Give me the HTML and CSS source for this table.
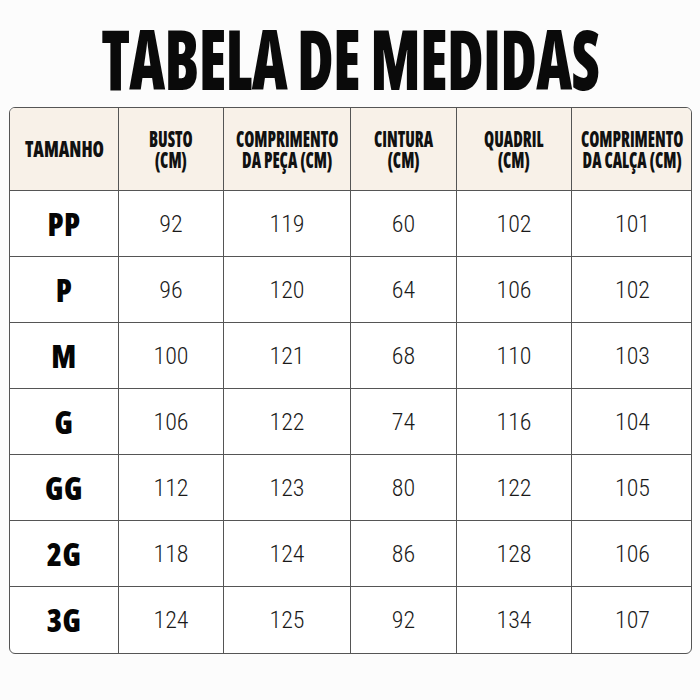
FILE: index.html
```html
<!DOCTYPE html>
<html lang="pt-BR">
<head>
<meta charset="utf-8">
<title>Tabela de Medidas</title>
<link rel="stylesheet" href="styles.css">
</head>
<body>
<main class="page">
  <h1 class="title"><span class="title-text">TABELA DE MEDIDAS</span></h1>
  <div class="table">
    <div class="cell head"><span class="head-text wide">TAMANHO</span></div>
    <div class="cell head"><span class="head-text">BUSTO
(CM)</span></div>
    <div class="cell head"><span class="head-text">COMPRIMENTO
DA PEÇA (CM)</span></div>
    <div class="cell head"><span class="head-text">CINTURA
(CM)</span></div>
    <div class="cell head"><span class="head-text">QUADRIL
(CM)</span></div>
    <div class="cell head last"><span class="head-text">COMPRIMENTO
DA CALÇA (CM)</span></div>

    <div class="cell size">PP</div><div class="cell num">92</div><div class="cell num">119</div><div class="cell num">60</div><div class="cell num">102</div><div class="cell num last">101</div>
    <div class="cell size">P</div><div class="cell num">96</div><div class="cell num">120</div><div class="cell num">64</div><div class="cell num">106</div><div class="cell num last">102</div>
    <div class="cell size">M</div><div class="cell num">100</div><div class="cell num">121</div><div class="cell num">68</div><div class="cell num">110</div><div class="cell num last">103</div>
    <div class="cell size">G</div><div class="cell num">106</div><div class="cell num">122</div><div class="cell num">74</div><div class="cell num">116</div><div class="cell num last">104</div>
    <div class="cell size">GG</div><div class="cell num">112</div><div class="cell num">123</div><div class="cell num">80</div><div class="cell num">122</div><div class="cell num last">105</div>
    <div class="cell size">2G</div><div class="cell num">118</div><div class="cell num">124</div><div class="cell num">86</div><div class="cell num">128</div><div class="cell num last">106</div>
    <div class="cell size bottom">3G</div><div class="cell num bottom">124</div><div class="cell num bottom">125</div><div class="cell num bottom">92</div><div class="cell num bottom">134</div><div class="cell num last bottom">107</div>
  </div>
</main>
</body>
</html>
```
FILE: styles.css
```css
html, body {
  margin: 0;
  padding: 0;
  background: #fcfcfc;
}
.page {
  width: 700px;
  height: 700px;
  display: flex;
  flex-direction: column;
  align-items: center;
}
.title {
  margin: 0 0 -8px;
  font-family: "Open Sans", sans-serif;
  font-stretch: 75%;
  font-weight: 800;
  font-size: 84px;
  line-height: 115px;
  color: #0a0a0a;
  text-align: center;
}
.title-text {
  display: inline-block;
  transform: scaleX(0.745);
  letter-spacing: -1px;
}
.table {
  align-self: flex-start;
  margin-left: 9px;
  width: 683px;
  display: grid;
  grid-template-columns: 109px 105px 127px 106px 115px 121px;
  grid-template-rows: 83px repeat(7, 66px);
  border: 1.5px solid #555;
  border-radius: 6px;
  overflow: hidden;
  background: #fff;
  box-sizing: border-box;
}
.cell {
  display: flex;
  align-items: center;
  justify-content: center;
  text-align: center;
  border-right: 1px solid #555;
  border-bottom: 1px solid #555;
  color: #111;
}
.cell.last { border-right: none; }
.cell.bottom { border-bottom: none; }
.head {
  background: #f8f1e8;
  border-bottom: 1.5px solid #555;
  padding-bottom: 1px;
}
.head-text {
  display: inline-block;
  white-space: pre;
  font-family: "Open Sans", sans-serif;
  font-stretch: 75%;
  font-weight: 800;
  font-size: 23px;
  line-height: 21px;
  color: #111;
  transform: scaleX(0.71);
}
.head-text.wide {
  transform: scaleX(0.8);
}
.size {
  font-family: "Open Sans", sans-serif;
  font-stretch: 75%;
  font-weight: 800;
  font-size: 31px;
  letter-spacing: 0.5px;
  color: #050505;
}
.num {
  font-family: "Roboto Condensed", "Open Sans", sans-serif;
  font-weight: 300;
  font-size: 24px;
  color: #1a1a1a;
}
```
